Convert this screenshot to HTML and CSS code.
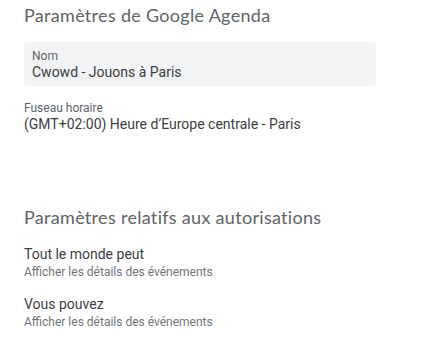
FILE: index.html
```html
<!DOCTYPE html>
<html lang="fr">
<head>
  <meta charset="UTF-8">
  <title>Paramètres de Google Agenda</title>
  <meta name="viewport" content="width=device-width, initial-scale=1.0">
  <link rel="stylesheet" href="styles.css">
</head>
<body>

  <section class="section">
    <h2>Paramètres de Google Agenda</h2>

    <div class="field filled">
      <label>Nom</label>
      <div class="value">Cwowd - Jouons à Paris</div>
    </div>

    <div class="field">
      <label>Fuseau horaire</label>
      <div class="value">(GMT+02:00) Heure d’Europe centrale - Paris</div>
    </div>
  </section>

  <section class="section perms">
    <h2>Paramètres relatifs aux autorisations</h2>

    <div class="perm">
      <div class="perm-title">Tout le monde peut</div>
      <div class="perm-desc">Afficher les détails des événements</div>
    </div>

    <div class="perm">
      <div class="perm-title">Vous pouvez</div>
      <div class="perm-desc">Afficher les détails des événements</div>
    </div>
  </section>

</body>
</html>
```

FILE: styles.css
```css
body {
  font-family: Roboto, 'Liberation Sans', sans-serif;
  margin: 0;
  padding: 0 0 0 24px;
  background: #fff;
  color: #3c4043;
}

h2 {
  font-family: Lato, 'Open Sans', sans-serif;
  font-size: 18px;
  font-weight: 400;
  letter-spacing: 0.3px;
  color: #5f6368;
  margin: 0;
  line-height: 24px;
}

.section {
  width: 352px;
}

.section:first-child h2 {
  padding-top: 3px;
}

.field {
  margin-top: 14px;
}

.field.filled {
  margin-top: 15px;
  background: #f1f3f4;
  border-radius: 4px;
  padding: 6px 8px;
}

.field label {
  display: block;
  font-size: 12px;
  line-height: 16px;
  color: #5f6368;
}

.field .value {
  font-size: 14px;
  line-height: 16px;
}

.perms {
  margin-top: 73px;
}

.perm {
  margin-top: 15px;
}

.perm + .perm {
  margin-top: 14px;
}

.perm-title {
  font-size: 14px;
  line-height: 20px;
  color: #3c4043;
}

.perm-desc {
  font-size: 12px;
  line-height: 16px;
  color: #70757a;
}
```
